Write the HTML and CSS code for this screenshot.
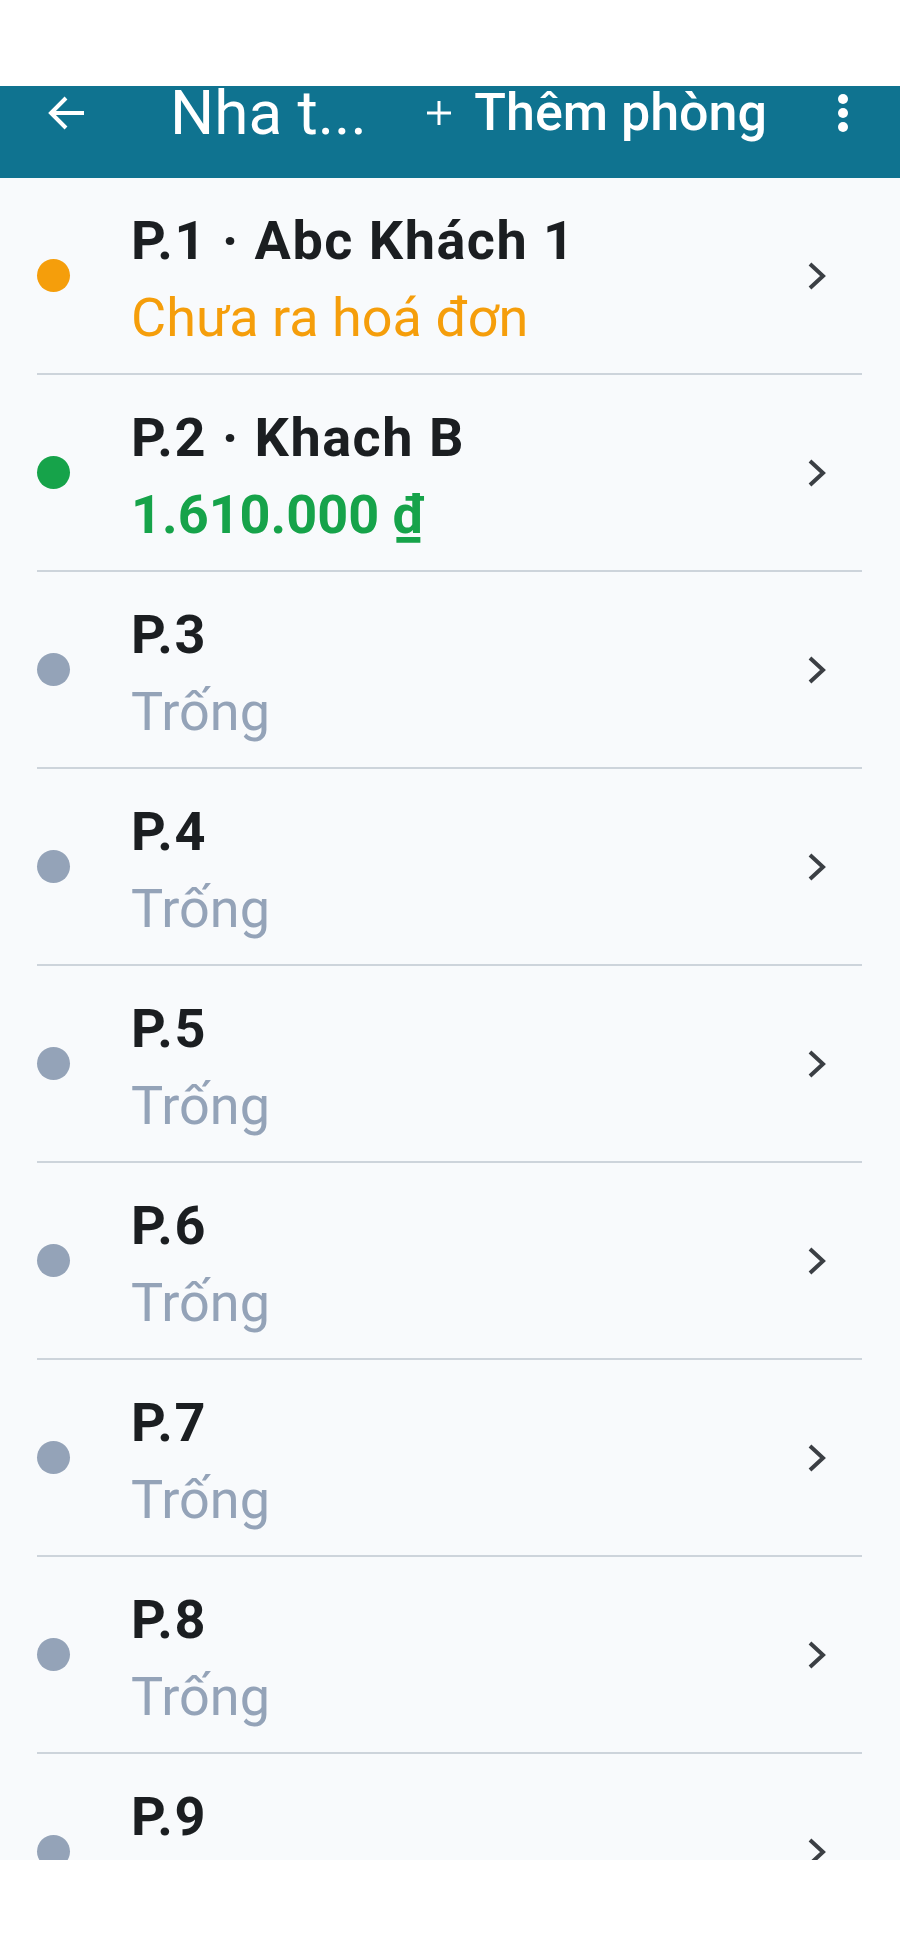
FILE: index.html
```html
<!DOCTYPE html>
<html lang="vi">
<head>
<meta charset="utf-8">
<title>Nha t...</title>
<link rel="stylesheet" href="styles.css">
</head>
<body>
<div class="screen">
  <div class="statusbar"></div>
  <header class="appbar">
    <svg class="back" viewBox="0 0 38 38" width="38" height="38"><path d="M37 19H4M19 4L4 19L19 34" fill="none" stroke="#fff" stroke-width="4" stroke-linejoin="miter"/></svg>
    <div class="title">Nha t...</div>
    <div class="action">
      <svg class="plus" viewBox="0 0 26 26" width="26" height="26"><path d="M13 1V25M1 13H25" stroke="#fff" stroke-width="3"/></svg>
      <span class="action-label">Thêm phòng</span>
    </div>
    <div class="more"><span></span><span></span><span></span></div>
  </header>
  <main class="list">
    <div class="room">
      <span class="dot dot-pending"></span>
      <div class="info"><div class="name">P.1 · Abc Khách 1</div><div class="status status-pending">Chưa ra hoá đơn</div></div>
      <svg class="chev" viewBox="0 0 20 30" width="20" height="30"><path d="M3 3L16 15L3 27" fill="none" stroke="#3b3f44" stroke-width="4"/></svg>
    </div>
    <div class="room">
      <span class="dot dot-paid"></span>
      <div class="info"><div class="name">P.2 · Khach B</div><div class="status status-paid">1.610.000 ₫</div></div>
      <svg class="chev" viewBox="0 0 20 30" width="20" height="30"><path d="M3 3L16 15L3 27" fill="none" stroke="#3b3f44" stroke-width="4"/></svg>
    </div>
    <div class="room">
      <span class="dot dot-empty"></span>
      <div class="info"><div class="name">P.3</div><div class="status status-empty">Trống</div></div>
      <svg class="chev" viewBox="0 0 20 30" width="20" height="30"><path d="M3 3L16 15L3 27" fill="none" stroke="#3b3f44" stroke-width="4"/></svg>
    </div>
    <div class="room">
      <span class="dot dot-empty"></span>
      <div class="info"><div class="name">P.4</div><div class="status status-empty">Trống</div></div>
      <svg class="chev" viewBox="0 0 20 30" width="20" height="30"><path d="M3 3L16 15L3 27" fill="none" stroke="#3b3f44" stroke-width="4"/></svg>
    </div>
    <div class="room">
      <span class="dot dot-empty"></span>
      <div class="info"><div class="name">P.5</div><div class="status status-empty">Trống</div></div>
      <svg class="chev" viewBox="0 0 20 30" width="20" height="30"><path d="M3 3L16 15L3 27" fill="none" stroke="#3b3f44" stroke-width="4"/></svg>
    </div>
    <div class="room">
      <span class="dot dot-empty"></span>
      <div class="info"><div class="name">P.6</div><div class="status status-empty">Trống</div></div>
      <svg class="chev" viewBox="0 0 20 30" width="20" height="30"><path d="M3 3L16 15L3 27" fill="none" stroke="#3b3f44" stroke-width="4"/></svg>
    </div>
    <div class="room">
      <span class="dot dot-empty"></span>
      <div class="info"><div class="name">P.7</div><div class="status status-empty">Trống</div></div>
      <svg class="chev" viewBox="0 0 20 30" width="20" height="30"><path d="M3 3L16 15L3 27" fill="none" stroke="#3b3f44" stroke-width="4"/></svg>
    </div>
    <div class="room">
      <span class="dot dot-empty"></span>
      <div class="info"><div class="name">P.8</div><div class="status status-empty">Trống</div></div>
      <svg class="chev" viewBox="0 0 20 30" width="20" height="30"><path d="M3 3L16 15L3 27" fill="none" stroke="#3b3f44" stroke-width="4"/></svg>
    </div>
    <div class="room">
      <span class="dot dot-empty"></span>
      <div class="info"><div class="name">P.9</div><div class="status status-empty">Trống</div></div>
      <svg class="chev" viewBox="0 0 20 30" width="20" height="30"><path d="M3 3L16 15L3 27" fill="none" stroke="#3b3f44" stroke-width="4"/></svg>
    </div>
  </main>
</div>
</body>
</html>
```
FILE: styles.css
```css
* { box-sizing: border-box; }
html, body { margin: 0; padding: 0; background: #ffffff; }
body { font-family: Roboto, "Noto Sans", "Liberation Sans", sans-serif; }

.screen { width: 900px; height: 1947px; overflow: hidden; background: #ffffff; }
.statusbar { height: 86px; background: #ffffff; }

.appbar {
  height: 92px;
  background: #0f7390;
  display: flex;
  align-items: flex-start;
  color: #ffffff;
}
.appbar > * { height: 54px; display: flex; align-items: center; }
.back { margin-left: 47px; margin-top: 8px; height: 38px; flex: none; }
.title {
  margin-left: 85px;
  flex: 1;
  font-size: 62px;
  font-weight: 400;
  white-space: nowrap;
  line-height: 54px;
}
.action { flex: none; gap: 22px; }
.plus { flex: none; }
.action-label { font-size: 52px; font-weight: 500; line-height: 54px; white-space: nowrap; }
.more {
  width: 48px;
  margin-left: 52px;
  margin-right: 33px;
  flex: none;
  flex-direction: column;
  justify-content: center;
  gap: 4px;
}
.more span { width: 10px; height: 10px; border-radius: 50%; background: #ffffff; }

.list { height: 1682px; overflow: hidden; background: #f8fafc; }

.room {
  height: 197px;
  margin: 0 38px 0 37px;
  border-bottom: 2px solid #cdd4db;
  display: flex;
  align-items: center;
}
.dot { width: 33px; height: 33px; border-radius: 50%; flex: none; }
.dot-pending { background: #f59e0b; }
.dot-paid { background: #16a34a; }
.dot-empty { background: #94a3b8; }

.info { flex: 1; margin-left: 61px; padding-top: 7px; }
.name { font-size: 54px; font-weight: 700; line-height: 72px; color: #1b1e21; white-space: nowrap; letter-spacing: 1.5px; }
.status { font-size: 54px; font-weight: 400; line-height: 72px; margin-top: 5px; white-space: nowrap; }
.status-pending { color: #f59e0b; }
.status-paid { color: #16a34a; font-weight: 700; }
.status-empty { color: #94a3b8; }

.chev { flex: none; margin-right: 35px; }
```
